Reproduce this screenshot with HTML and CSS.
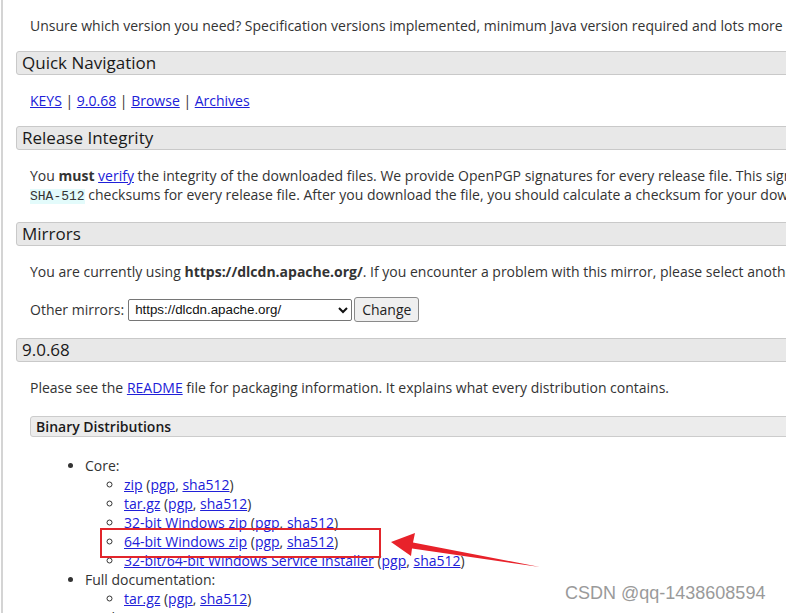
FILE: index.html
```html
<!DOCTYPE html>
<html lang="en">
<head>
    <meta charset="UTF-8">
    <meta name="viewport" content="width=device-width, initial-scale=1.0">
    <title>Apache Tomcat 9 Software Downloads</title>
    <link rel="stylesheet" href="styles.css">
</head>
<body>
    <div class="page">
        <p class="cut">This page provides download links for obtaining the latest version of Tomcat 9.0.x software, as well as links to the archives of older releases.</p>
        <p>Unsure which version you need? Specification versions implemented, minimum Java version required and lots more useful information may be found on the <a href="#">'which version?'</a> page.</p>

        <h3>Quick Navigation</h3>
        <p><a href="#">KEYS</a> | <a href="#">9.0.68</a> | <a href="#">Browse</a> | <a href="#">Archives</a></p>

        <h3>Release Integrity</h3>
        <p>You <strong>must</strong> <a href="#">verify</a> the integrity of the downloaded files. We provide OpenPGP signatures for every release file. This signature should be matched against the <a href="#">KEYS</a> file which contains the OpenPGP keys of Tomcat's Release Managers. We also provide<br><code>SHA-512</code> checksums for every release file. After you download the file, you should calculate a checksum for your download, and make sure it is the same as ours.</p>

        <h3>Mirrors</h3>
        <p>You are currently using <strong>https://dlcdn.apache.org/</strong>. If you encounter a problem with this mirror, please select another mirror. If all mirrors are failing, there are <em>backup</em> mirrors (at the end of the mirrors list) that should be available.</p>
        <form class="mirror-form">
            <label for="preferred">Other mirrors:</label>
            <select id="preferred" class="mirror-select">
                <option>https://dlcdn.apache.org/</option>
            </select>
            <button type="button" class="change-btn">Change</button>
        </form>

        <h3>9.0.68</h3>
        <p>Please see the <a href="#">README</a> file for packaging information. It explains what every distribution contains.</p>

        <h4>Binary Distributions</h4>
        <ul class="dist-list">
            <li>Core:
                <ul>
                    <li><a href="#">zip</a> (<a href="#">pgp</a>, <a href="#">sha512</a>)</li>
                    <li><a href="#">tar.gz</a> (<a href="#">pgp</a>, <a href="#">sha512</a>)</li>
                    <li><a href="#">32-bit Windows zip</a> (<a href="#">pgp</a>, <a href="#">sha512</a>)</li>
                    <li><a href="#">64-bit Windows zip</a> (<a href="#">pgp</a>, <a href="#">sha512</a>)</li>
                    <li><a href="#">32-bit/64-bit Windows Service Installer</a> (<a href="#">pgp</a>, <a href="#">sha512</a>)</li>
                </ul>
            </li>
            <li>Full documentation:
                <ul>
                    <li><a href="#">tar.gz</a> (<a href="#">pgp</a>, <a href="#">sha512</a>)</li>
                </ul>
            </li>
            <li>Deployer:
                <ul>
                    <li><a href="#">zip</a> (<a href="#">pgp</a>, <a href="#">sha512</a>)</li>
                </ul>
            </li>
        </ul>
    </div>

    <!-- screenshot annotations -->
    <div class="highlight-box"></div>
    <svg class="arrow" width="786" height="613" viewBox="0 0 786 613">
        <polygon points="391,542 415,533 413,542.5 540,567 412,548.5 411,556" fill="#e8222a"/>
    </svg>
    <div class="watermark">CSDN @qq-1438608594</div>
</body>
</html>
```

FILE: styles.css
```css
* {
    box-sizing: border-box;
}

body {
    margin: 0;
    overflow: hidden;
    background: #fff;
    font-family: "Open Sans", "Noto Sans", sans-serif;
    font-size: 14px;
    line-height: 19px;
    color: #333;
}

a {
    color: #2020d8;
    text-decoration: underline;
}

.page {
    width: 1900px;
    margin-left: 1px;
    border-left: 2px solid #d4d4d4;
    padding-left: 13px;
    min-height: 640px;
}

p {
    margin: 16px 0 16px 14px;
    white-space: nowrap;
}

p.cut {
    margin-top: -19px;
    margin-bottom: 14px;
}

h3 {
    margin: 16px 0;
    height: 24px;
    padding: 0 5px;
    background: #e8e8e8;
    border: 1px solid #c9c9c9;
    border-radius: 3px;
    font-size: 17px;
    font-weight: 500;
    line-height: 22px;
    color: #1a1a1a;
}

h4 {
    margin: 19px 0 0 14px;
    height: 21px;
    padding: 0 5px;
    background: #ececec;
    border: 1px solid #cccccc;
    border-radius: 3px;
    font-size: 14px;
    font-weight: 600;
    line-height: 19px;
    color: #1a1a1a;
}

code {
    font-family: "Liberation Mono", "DejaVu Sans Mono", monospace;
    font-size: 13px;
    background: #e3fbfb;
    padding: 0;
}

.mirror-form {
    display: flex;
    align-items: center;
    margin: 13px 0 15px 14px;
    height: 25px;
}

.mirror-select {
    margin-left: 4px;
    width: 224px;
    height: 22px;
    font-family: "Liberation Sans", Arial, sans-serif;
    font-size: 13.33px;
    color: #111;
    background: #fff;
    border: 1px solid #767676;
    border-radius: 2px;
    padding: 0 2px;
}

.change-btn {
    margin-left: 2px;
    height: 25px;
    padding: 0 7px;
    font-family: "Open Sans", sans-serif;
    font-size: 14px;
    color: #222;
    background: #efefef;
    border: 1px solid #8a8a8a;
    border-radius: 3px;
}

.dist-list {
    margin: 19px 0 0 14px;
    padding-left: 55px;
    list-style: disc;
}

.dist-list ul {
    margin: 0;
    padding-left: 39px;
    list-style: circle;
}

.highlight-box {
    position: absolute;
    left: 100px;
    top: 528px;
    width: 281px;
    height: 30px;
    border: 2px solid #e2252b;
    pointer-events: none;
}

.arrow {
    position: absolute;
    left: 0;
    top: 0;
    pointer-events: none;
}

.watermark {
    position: absolute;
    left: 565px;
    top: 583px;
    font-family: "Liberation Sans", Arial, sans-serif;
    font-size: 18px;
    line-height: 20px;
    color: #9a9a9a;
    text-shadow: 0 0 2px #fff;
}
```
